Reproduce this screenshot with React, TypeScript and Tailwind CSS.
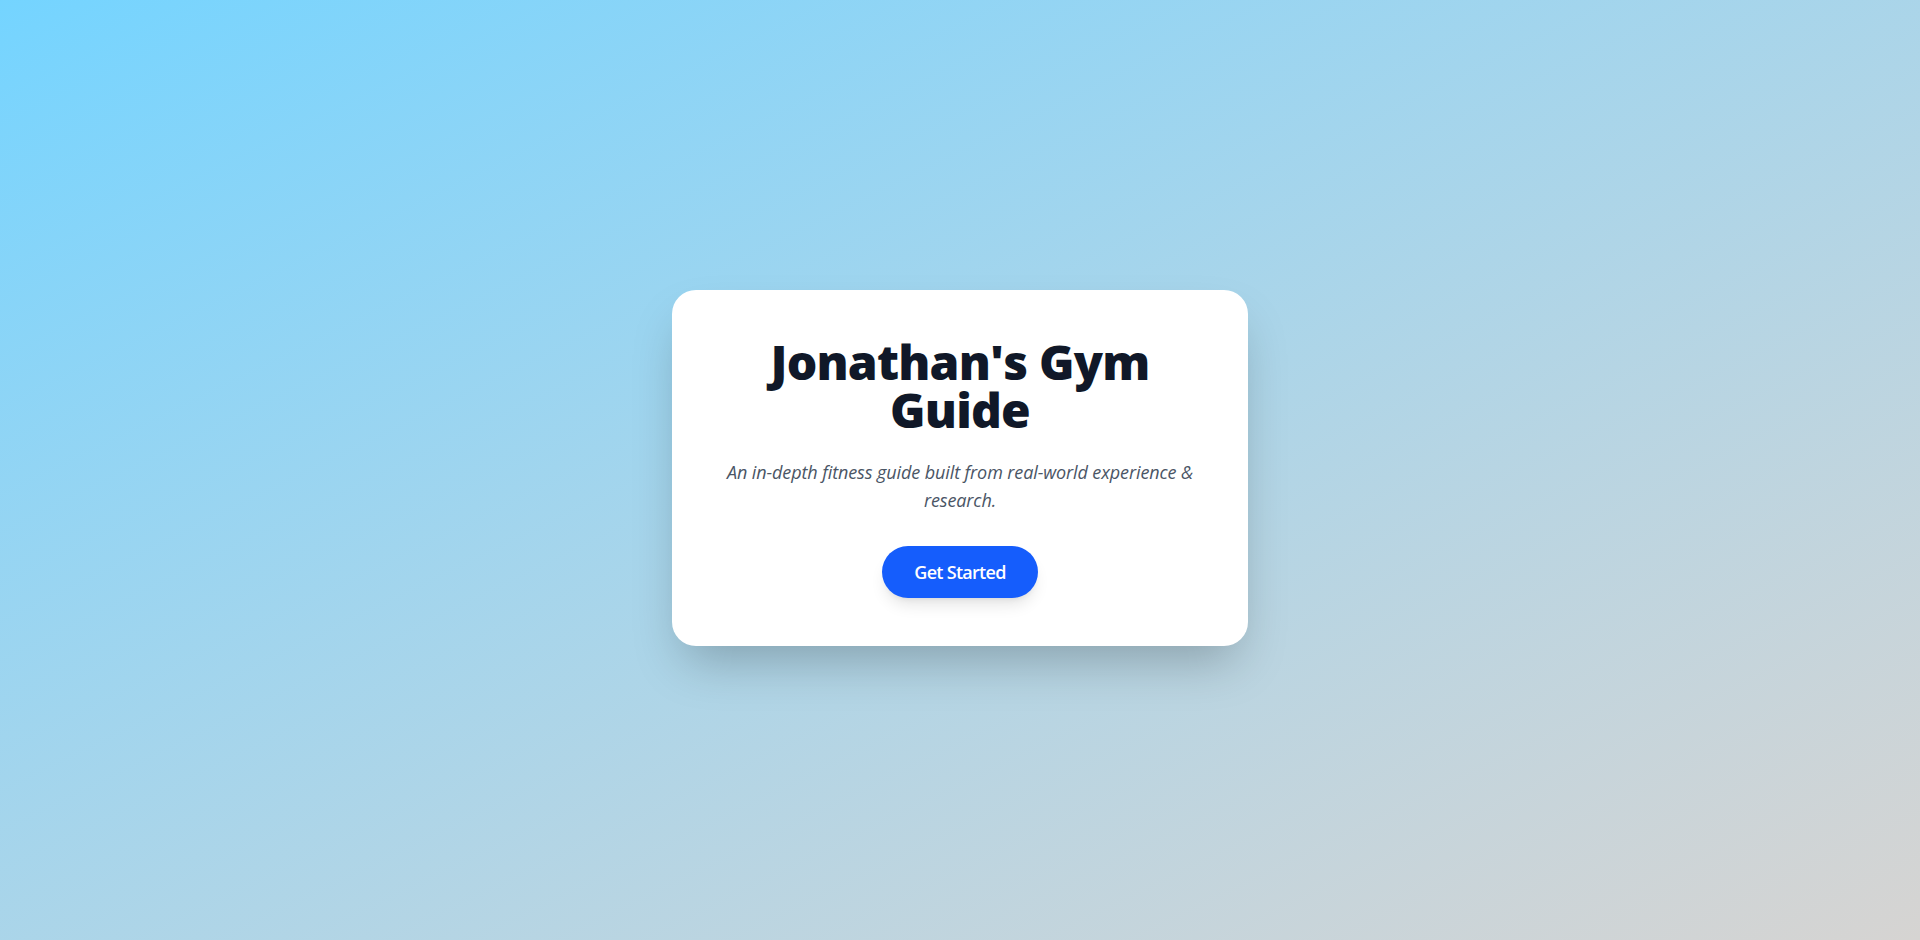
import React from "react";

export default function App() {
  return (
    <div
      className="min-h-screen w-full flex items-center justify-center bg-linear-to-br from-[#74d4ff] to-[#d6d4d2]"
      style={{ fontFamily: '"Open Sans", "Noto Sans", sans-serif' }}
    >
      <div className="w-full max-w-xl bg-white rounded-3xl p-12 shadow-2xl text-center -mt-[4px]">
        <h1 className="text-5xl leading-[48px] font-extrabold text-[#101828] mb-6 tracking-[-0.8px]">
          Jonathan's Gym Guide
        </h1>
        <p className="text-lg leading-7 italic text-[#4a5565] mb-8 tracking-[-0.1px]">
          An in-depth fitness guide built from real-world experience &amp; research.
        </p>
        <button className="px-8 py-3 text-lg leading-7 font-semibold text-white bg-[#155dfc] rounded-full shadow-lg tracking-[-0.7px]">
          Get Started
        </button>
      </div>
    </div>
  );
}
